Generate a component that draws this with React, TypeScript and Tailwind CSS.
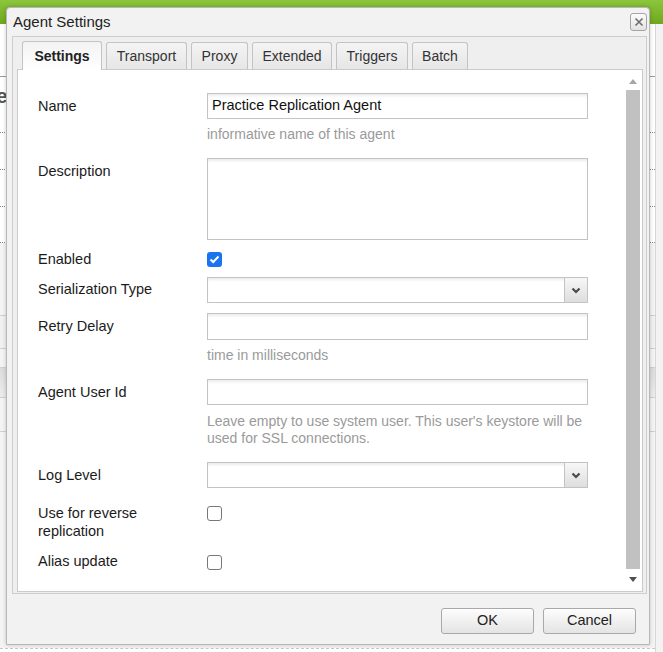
import React from 'react'

const FONT = "font-['Liberation_Sans',Arial,sans-serif]"
const LABEL = 'w-[169px] shrink-0 pr-[19px] text-[14.5px] text-[#1b1b1b]'
const BOX =
  'w-[381px] border border-[#c3c3c3] bg-white shadow-[inset_0_3px_3px_-1px_rgba(0,0,0,0.08)]'
const HINT = 'text-[14px] leading-[17px] text-[#9a9a9a]'

const TABS = [
  { name: 'Settings', w: 'w-[80px]' },
  { name: 'Transport', w: 'w-[81px]' },
  { name: 'Proxy', w: 'w-[57px]' },
  { name: 'Extended', w: 'w-[80px]' },
  { name: 'Triggers', w: 'w-[72px]' },
  { name: 'Batch', w: 'w-[56px]' },
]

function Chevron() {
  return (
    <svg width="10" height="7" viewBox="0 0 10 7">
      <path d="M1.5 1.5 L5 5 L8.5 1.5" fill="none" stroke="#4a4a4a" strokeWidth="2.2" />
    </svg>
  )
}

function Select() {
  return (
    <div className={`${BOX} flex h-[26px] justify-end`}>
      <div className="flex w-[23px] items-center justify-center border-l border-[#c3c3c3] bg-gradient-to-b from-[#f7f7f7] to-[#dedede]">
        <Chevron />
      </div>
    </div>
  )
}

function Checkbox({ checked }: { checked?: boolean }) {
  if (checked)
    return (
      <div className="flex h-[15px] w-[15px] items-center justify-center rounded-[3px] bg-[#1a74f0]">
        <svg width="11" height="9" viewBox="0 0 11 9">
          <path d="M1.5 4.5 L4.2 7 L9.5 1.5" fill="none" stroke="white" strokeWidth="2" />
        </svg>
      </div>
    )
  return <div className="h-[15px] w-[15px] rounded-[3px] border border-[#777] bg-white" />
}

function Button({ children }: { children: React.ReactNode }) {
  return (
    <div className="flex h-[26px] w-[93px] items-center justify-center rounded-[3px] border border-[#a9a9a9] bg-gradient-to-b from-[#fdfdfd] to-[#e4e4e4] text-[14.5px] text-[#222] shadow-[inset_0_1px_0_#fff]">
      {children}
    </div>
  )
}

export default function App() {
  return (
    <div className={`relative h-[652px] w-[663px] overflow-hidden bg-white ${FONT}`}>
      {/* page behind the dialog */}
      <div className="h-[24px] bg-gradient-to-b from-[#8cc63c] to-[#6fa81c]" />
      <div className="flex h-[628px]">
        <div className="flex w-[655px] flex-col">
          <div className="h-[53px] border-b border-[#9a9a9a]" />
          <div className="flex h-[38px] items-center">
            <span className="-ml-[4px] text-[21px] font-bold text-[#555]">e</span>
          </div>
          <div className="h-[18px] border-b border-dotted border-[#888]" />
          <div className="h-[37px] border-b border-dotted border-[#888]" />
          <div className="h-[37px] border-b border-dotted border-[#888]" />
          <div className="h-[36px] border-b border-dotted border-[#888]" />
          <div className="h-[73px] border-b border-[#cfcfcf] bg-[#f4f4f4]" />
          <div className="h-[33px] border-b border-[#cfcfcf] bg-[#f1f1f1]" />
          <div className="h-[19px] border-b border-[#cfcfcf] bg-[#f4f4f4]" />
          <div className="h-[30px] border-b border-[#cfcfcf] bg-gradient-to-b from-[#dcdcdc] to-[#ececec]" />
          <div className="h-[34px] border-b border-[#cfcfcf] bg-[#f4f4f4]" />
          <div className="flex-1 bg-[#f4f4f4]" />
          <div className="h-[4px] border-t border-dashed border-[#c8c8c8]" />
        </div>
        <div className="flex-1 border-l border-[#d6d6d6] bg-[#f3f3f3]" />
      </div>

      {/* dialog */}
      <div className="absolute left-[6px] top-[7px] flex h-[638px] w-[644px] flex-col rounded-t-[4px] border border-[#b8b8b8] bg-[#f2f2f2] shadow-[0_0_4px_rgba(0,0,0,0.2)]">
        <div className="flex h-[28px] items-center justify-between pl-[6px] pr-[2px]">
          <span className="text-[15px] text-[#222]">Agent Settings</span>
          <div className="flex h-[18px] w-[17px] items-center justify-center rounded-[3px] border border-[#a5a5a5] bg-gradient-to-b from-[#fbfbfb] to-[#e3e3e3]">
            <svg width="10" height="10" viewBox="0 0 10 10">
              <path d="M1.5 1.5 L8.5 8.5 M8.5 1.5 L1.5 8.5" stroke="#6e6e6e" strokeWidth="1.6" />
            </svg>
          </div>
        </div>

        <div className="ml-[5px] flex h-[558px] w-[635px] flex-col border border-[#cdcdcd] bg-[#efefef] pb-[1px] pl-[4px] pr-[3px]">
          {/* tabs */}
          <div className="flex h-[32px] items-end gap-[4px] pl-[5px]">
            {TABS.map((t, i) =>
              i === 0 ? (
                <div
                  key={t.name}
                  className={`${t.w} relative z-10 -mb-[1px] flex h-[29px] items-center justify-center rounded-t-[3px] border border-b-0 border-[#c3c3c3] bg-gradient-to-b from-[#f3f3f3] to-white text-[14px] font-bold text-[#222]`}
                >
                  {t.name}
                </div>
              ) : (
                <div
                  key={t.name}
                  className={`${t.w} flex h-[27px] items-center justify-center rounded-t-[3px] border border-b-0 border-[#c3c3c3] bg-gradient-to-b from-[#f4f4f4] to-[#e6e6e6] text-[14px] text-[#333]`}
                >
                  {t.name}
                </div>
              ),
            )}
          </div>

          {/* content */}
          <div className="flex h-[523px] border border-[#cbcbcb] bg-white">
            <div className="flex w-[606px] flex-col pl-[20px]">
              <div className="mt-[23px] flex">
                <div className={`${LABEL} pt-[5px] leading-[16px]`}>Name</div>
                <div className="flex flex-col">
                  <div className={`${BOX} flex h-[26px] items-center px-[4px] text-[14.5px] text-[#111]`}>
                    Practice Replication Agent
                  </div>
                  <div className={`${HINT} mt-[7px]`}>informative name of this agent</div>
                </div>
              </div>

              <div className="mt-[15px] flex">
                <div className={`${LABEL} pt-[5px] leading-[16px]`}>Description</div>
                <div className={`${BOX} h-[82px]`} />
              </div>

              <div className="mt-[10px] flex">
                <div className={`${LABEL} pt-[1px] leading-[16px]`}>Enabled</div>
                <div className="pt-[2px]">
                  <Checkbox checked />
                </div>
              </div>

              <div className="mt-[10px] flex">
                <div className={`${LABEL} pt-[4px] leading-[16px]`}>Serialization Type</div>
                <Select />
              </div>

              <div className="mt-[10px] flex">
                <div className={`${LABEL} pt-[5px] leading-[16px]`}>Retry Delay</div>
                <div className="flex flex-col">
                  <div className={`${BOX} h-[27px]`} />
                  <div className={`${HINT} mt-[7px]`}>time in milliseconds</div>
                </div>
              </div>

              <div className="mt-[15px] flex">
                <div className={`${LABEL} pt-[5px] leading-[16px]`}>Agent User Id</div>
                <div className="flex w-[381px] flex-col">
                  <div className={`${BOX} h-[26px]`} />
                  <div className={`${HINT} mt-[8px]`}>
                    Leave empty to use system user. This user's keystore will be used for SSL connections.
                  </div>
                </div>
              </div>

              <div className="mt-[15px] flex">
                <div className={`${LABEL} pt-[5px] leading-[16px]`}>Log Level</div>
                <Select />
              </div>

              <div className="mt-[16px] flex">
                <div className={`${LABEL} leading-[18px]`}>
                  <div className="w-[140px]">Use for reverse replication</div>
                </div>
                <div className="pt-[2px]">
                  <Checkbox />
                </div>
              </div>

              <div className="mt-[12px] flex">
                <div className={`${LABEL} leading-[18px]`}>Alias update</div>
                <div className="pt-[3px]">
                  <Checkbox />
                </div>
              </div>
            </div>

            {/* scrollbar */}
            <div className="flex w-[17px] flex-col items-center">
              <div className="flex h-[20px] items-center justify-center pt-[3px]">
                <svg width="8" height="5" viewBox="0 0 8 5">
                  <path d="M0 5 L4 0 L8 5 Z" fill="#a6a6a6" />
                </svg>
              </div>
              <div className="w-[14px] flex-1 bg-[#c1c1c1]" />
              <div className="flex h-[22px] items-center justify-center pb-[2px]">
                <svg width="8" height="5" viewBox="0 0 8 5">
                  <path d="M0 0 L8 0 L4 5 Z" fill="#505050" />
                </svg>
              </div>
            </div>
          </div>
        </div>

        {/* footer */}
        <div className="flex flex-1 justify-end gap-[9px] pr-[13px] pt-[14px]">
          <Button>OK</Button>
          <Button>Cancel</Button>
        </div>
      </div>
    </div>
  )
}
